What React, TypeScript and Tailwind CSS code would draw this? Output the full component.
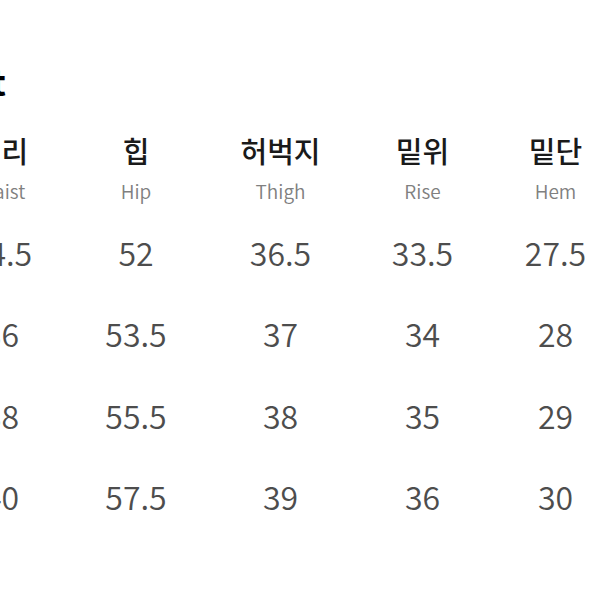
const columns = [
  { ko: "허리", en: "Waist", w: "w-[120px]" },
  { ko: "힙", en: "Hip", w: "w-[149px]" },
  { ko: "허벅지", en: "Thigh", w: "w-[140px]" },
  { ko: "밑위", en: "Rise", w: "w-[144px]" },
  { ko: "밑단", en: "Hem", w: "w-[122px]" },
];

const rows = [
  ["34.5", "52", "36.5", "33.5", "27.5"],
  ["36", "53.5", "37", "34", "28"],
  ["38", "55.5", "38", "35", "29"],
  ["40", "57.5", "39", "36", "30"],
];

export default function App() {
  return (
    <div
      className="w-[611px] h-[611px] overflow-hidden bg-white"
      style={{ fontFamily: '"Noto Sans CJK KR", "Noto Sans", sans-serif' }}
    >
      <div className="pt-[60px] flex">
        <h1 className="ml-[-191px] w-[197px] text-right text-[36px] leading-[40px] font-bold text-black whitespace-nowrap">
          Size Chart
        </h1>
      </div>

      <div className="ml-[-58.5px] flex mt-[33px]">
        {columns.map((c) => (
          <div key={c.en} className={`${c.w} shrink-0 text-center text-[29px] leading-[34px] font-medium text-[#1a1a1a]`}>
            {c.ko}
          </div>
        ))}
      </div>
      <div className="ml-[-58.5px] flex mt-[12px]">
        {columns.map((c) => (
          <div key={c.en} className={`${c.w} shrink-0 text-center text-[19px] leading-[24px] font-[350] text-[#808080]`}>
            {c.en}
          </div>
        ))}
      </div>

      <div className="mt-[8px]">
        {rows.map((r, i) => (
          <div key={i} className="ml-[-58.5px] flex h-[81.5px] items-center">
            {r.map((v, j) => (
              <div
                key={j}
                className={`${columns[j].w} shrink-0 text-center text-[32px] leading-[40px] font-[350] text-[#4d4d4d]`}
              >
                {v}
              </div>
            ))}
          </div>
        ))}
      </div>
    </div>
  );
}
